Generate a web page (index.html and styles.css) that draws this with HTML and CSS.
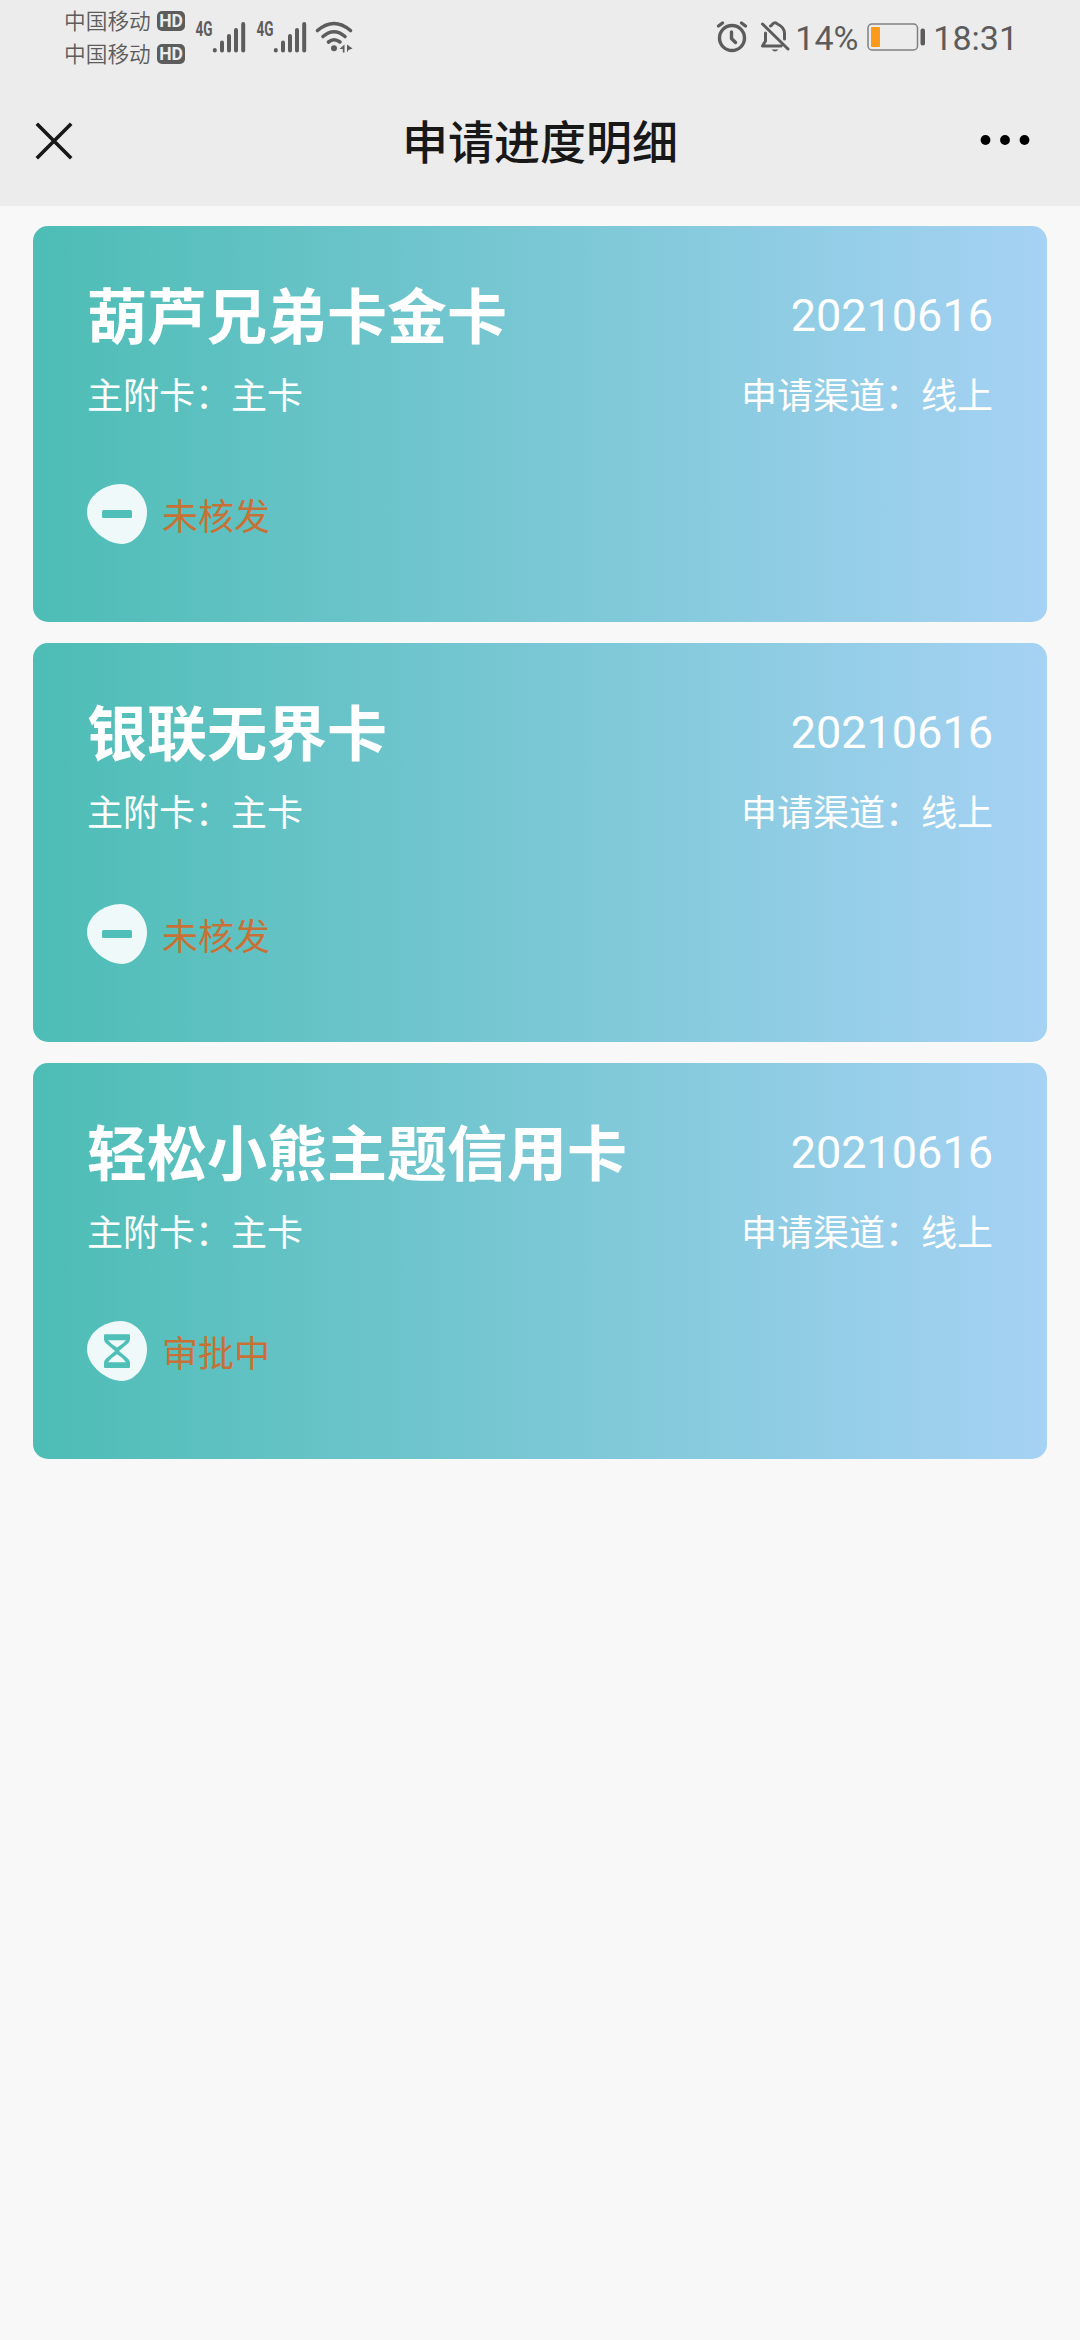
FILE: index.html
```html
<!DOCTYPE html>
<html lang="zh-CN">
<head>
<meta charset="utf-8">
<title>申请进度明细</title>
<link rel="stylesheet" href="styles.css">
</head>
<body>
<header class="header">
  <div class="status-bar">
    <div class="carriers">
      <div class="carrier"><span>中国移动</span><b class="hd">HD</b></div>
      <div class="carrier"><span>中国移动</span><b class="hd">HD</b></div>
    </div>
    <svg class="signal" viewBox="0 0 54 34">
      <text class="net" x="0.5" y="17" textLength="17" lengthAdjust="spacingAndGlyphs">4G</text>
      <path d="M19.8 31v.5M27 23.500v8M34 17v14.500M41 11v20.500M48.200 5v26.500"/>
    </svg>
    <svg class="signal" viewBox="0 0 54 34">
      <text class="net" x="0.5" y="17" textLength="17" lengthAdjust="spacingAndGlyphs">4G</text>
      <path d="M19.8 31v.5M27 23.500v8M34 17v14.500M41 11v20.500M48.200 5v26.500"/>
    </svg>
    <svg class="wifi" viewBox="0 0 40 32" fill="none" stroke="#5c5c5c" stroke-width="3.600" stroke-linecap="round">
      <path d="M2.500 8.500Q19 -5.500 35.500 8.500M8 14.500Q19 5 30 14.500M13.500 20Q19 15.500 25 20"/>
      <circle cx="19" cy="26.300" r="3" fill="#5c5c5c" stroke="none"/>
      <path d="M24.500 27L29.500 22.500V30.500H27.800V27ZM32 22.500V30.500L33.500 28L37.500 26.500Z" fill="#5c5c5c" stroke="none"/>
    </svg>
    <div class="system">
      <svg class="alarm" viewBox="0 0 32 32" fill="none" stroke="#5c5c5c" stroke-width="3.400" stroke-linecap="round" stroke-linejoin="round">
        <circle cx="16" cy="17" r="12.500"/><path d="M15.500 11V17.500L19.500 21.500M2.500 5L6.500 2M29.500 5L25.500 2"/>
      </svg>
      <svg class="bell" viewBox="0 0 30 32" fill="none" stroke="#5c5c5c" stroke-width="3" stroke-linecap="round" stroke-linejoin="round">
        <path d="M2.500 3L28 28M5.500 12V20L2.500 25H21M10.500 5Q12 4.500 12.500 3Q15 .5 17.500 3Q24 6 24.500 12V18"/>
        <path d="M11.500 28.500H18.500Q15 32.500 11.500 28.500Z" fill="#5c5c5c" stroke="none"/>
      </svg>
      <span class="percent">14%</span>
      <svg class="battery" viewBox="0 0 60 28">
        <rect x="1" y="1" width="49.500" height="26" rx="4" fill="none" stroke="#808080" stroke-width="1.500"/>
        <rect x="4" y="4" width="9" height="20" rx="1" fill="#fc9a1c"/>
        <rect x="53.500" y="5.500" width="4.500" height="17" rx="2" fill="#5c5c5c"/>
      </svg>
      <span class="time">18:31</span>
    </div>
  </div>
  <div class="nav">
    <svg class="close" viewBox="0 0 36 36" stroke="#181818" stroke-width="3.600"><path d="M.8 .8L35.200 35.200M35.200 .8L.8 35.200"/></svg>
    <h1>申请进度明细</h1>
    <svg class="more" viewBox="0 0 50 12"><circle cx="5.500" cy="6" r="4.900"/><circle cx="25" cy="6" r="4.900"/><circle cx="44.500" cy="6" r="4.900"/></svg>
  </div>
</header>

<main class="cards">
  <article class="card">
    <div class="row main"><h2>葫芦兄弟卡金卡</h2><time>20210616</time></div>
    <div class="row sub"><span>主附卡：主卡</span><span>申请渠道：线上</span></div>
    <div class="state">
      <svg viewBox="0 0 60 60">
        <path class="blob" d="M34 0C48 0 60 14 60 28C60 45 48 60 35 60C20 60 0 45 0 28C0 12 17 0 34 0Z"/>
        <rect class="mark" x="15" y="26" width="30" height="8" rx="1.500"/>
      </svg>
      <span>未核发</span>
    </div>
  </article>
  <article class="card tall">
    <div class="row main"><h2>银联无界卡</h2><time>20210616</time></div>
    <div class="row sub"><span>主附卡：主卡</span><span>申请渠道：线上</span></div>
    <div class="state">
      <svg viewBox="0 0 60 60">
        <path class="blob" d="M34 0C48 0 60 14 60 28C60 45 48 60 35 60C20 60 0 45 0 28C0 12 17 0 34 0Z"/>
        <rect class="mark" x="15" y="26" width="30" height="8" rx="1.500"/>
      </svg>
      <span>未核发</span>
    </div>
  </article>
  <article class="card">
    <div class="row main"><h2>轻松小熊主题信用卡</h2><time>20210616</time></div>
    <div class="row sub"><span>主附卡：主卡</span><span>申请渠道：线上</span></div>
    <div class="state">
      <svg viewBox="0 0 60 60">
        <path class="blob" d="M34 0C48 0 60 14 60 28C60 45 48 60 35 60C20 60 0 45 0 28C0 12 17 0 34 0Z"/>
        <path class="mark" fill-rule="evenodd" d="M18 13.300H42Q43 13.300 43 14.300V18.500Q42.800 21 40.500 22.800L32 30L40.500 37.200Q42.800 39 43 41.500V46Q43 47 42 47H18Q17 47 17 46V41.500Q17.200 39 19.500 37.200L28 30L19.500 22.800Q17.200 21 17 18.500V14.300Q17 13.300 18 13.300ZM21 19.300Q24.500 23.500 30 26.500Q35.500 23.500 39 19.300ZM21 41.300H39Q35.500 36.500 30 33.300Q24.500 36.500 21 41.300Z"/>
      </svg>
      <span>审批中</span>
    </div>
  </article>
</main>
</body>
</html>
```

FILE: styles.css
```css
* { box-sizing: border-box; margin: 0; padding: 0; }
body {
  min-height: 2340px;
  background: #f8f8f8;
  font-family: Roboto, "Noto Sans CJK SC", sans-serif;
  color: #fff;
}
svg { display: block; flex: none; overflow: visible; }

.header { height: 206px; background: #ececec; }
.status-bar {
  display: flex;
  height: 76px;
  padding: 0 62px 0 64px;
  color: #5c5c5c;
}
.carriers { width: 131px; padding-top: 4px; }
.carrier { display: flex; align-items: center; height: 33px; font-size: 21.7px; line-height: 31px; font-weight: 350; }
.carrier span { width: 93px; margin-top: -2px; white-space: nowrap; font-family: "Noto Sans CJK SC", sans-serif; }
.hd {
  width: 28px;
  height: 20px;
  border-radius: 5px;
  background: #5c5c5c;
  color: #ececec;
  font-size: 17.5px;
  line-height: 20px;
  font-weight: 700;
  text-align: center;
}
.signal { width: 54px; height: 34px; margin: 19px 7px 0 0; }
.signal path { stroke: #5c5c5c; stroke-width: 4; stroke-linecap: round; }
.net { font: 700 20px Roboto, sans-serif; fill: #5c5c5c; }
.wifi { width: 40px; height: 32px; margin: 22px 0 0 -2px; }
.system { display: flex; margin-left: auto; font-size: 34px; line-height: 40px; padding-top: 18px; }
.alarm { width: 32px; height: 32px; margin: 3px 12px 0 0; }
.bell { width: 30px; height: 32px; margin: 3px 5px 0 0; }
.battery { width: 60px; height: 28px; margin: 5px 6px 0 8px; }
.percent { width: 64px; }

.nav {
  display: grid;
  grid-template-columns: 180px 1fr 180px;
  align-items: center;
  height: 130px;
  padding: 0 36px;
}
.close { width: 36px; height: 36px; margin-top: -1px; }
.nav h1 { margin-top: 3px; font-size: 46px; line-height: 66px; font-weight: 500; text-align: center; color: #181818; }
.more { width: 50px; height: 12px; margin: -2px 14px 0 0; justify-self: end; }

.cards { display: flex; flex-direction: column; gap: 21px; padding: 20px 33px; }
.card {
  height: 396px;
  padding: 48px 54px 0;
  border-radius: 15px;
  background: linear-gradient(90deg, #4dbdb5, #a6d2f4);
}
.tall { height: 399px; }
.row { display: flex; justify-content: space-between; align-items: center; }
.main { height: 90px; }
.main h2 { font-size: 60px; line-height: 90px; font-weight: 700; }
.main time { margin-top: -8px; font-size: 45px; }
.sub { height: 66px; line-height: 66px; font-size: 36px; }
.state { display: flex; align-items: center; gap: 15px; height: 60px; margin-top: 54px; font-size: 36px; color: #c87137; }
.tall .state { margin-top: 57px; }
.state svg { width: 60px; height: 60px; }
.state span { margin-top: -1px; }
.blob { fill: #eff9fa; }
.mark { fill: #4fbfb8; }
```
